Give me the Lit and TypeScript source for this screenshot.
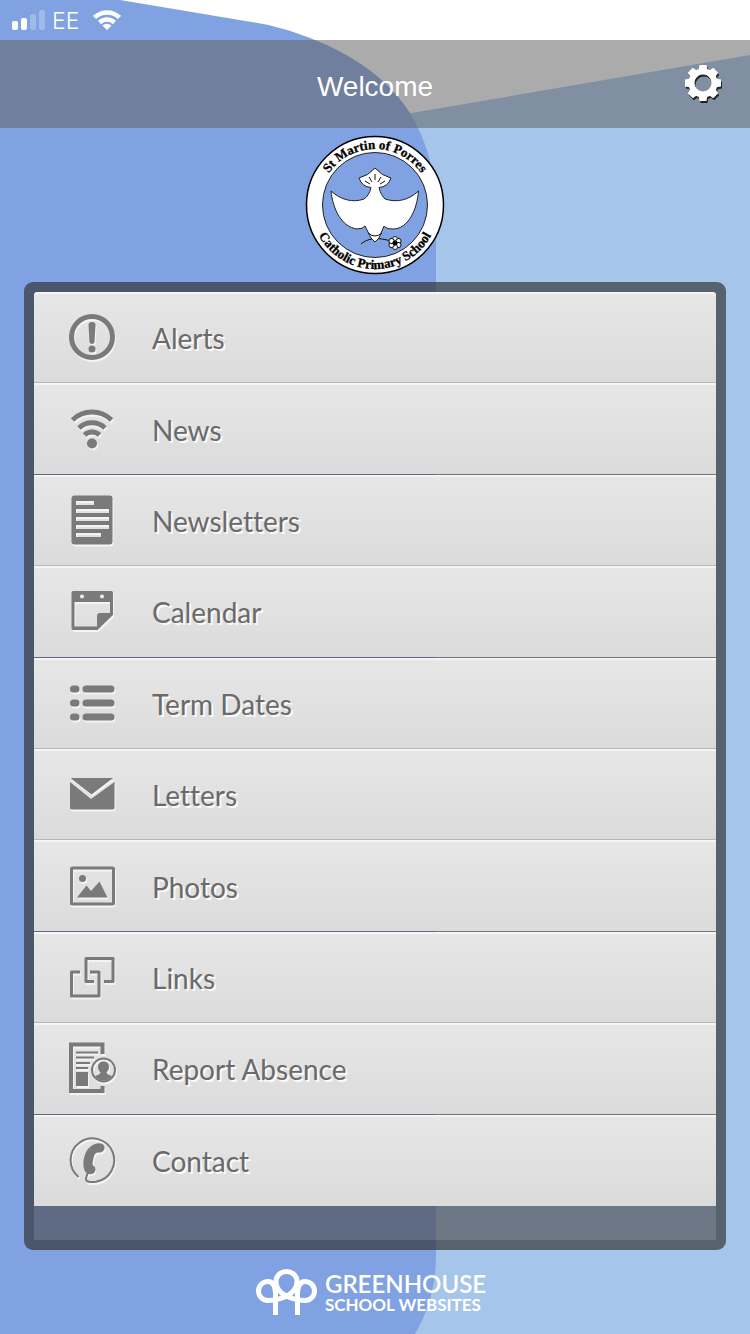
import { LitElement, html, svg, css } from "lit";
import { customElement } from "lit/decorators.js";

const wifi = svg`
  <path class="line w5" d="M-19.5-9A28 28 0 0 1 19.5-9M-13-1A19 19 0 0 1 13-1M-7.500 6A11 11 0 0 1 7.500 6"/>
  <circle cx="0" cy="14.500" r="5"/>`;

const icons = {
  alert: svg`
    <circle class="line w5" cx="0" cy="0" r="20.500"/>
    <path d="M-3.500-12.500Q-3.500-15 0-15T3.500-12.500L2.500 5Q2 7 0 7T-2.500 5Z"/>
    <circle cx="0" cy="12" r="3.500"/>`,
  news: wifi,
  newsletter: svg`
    <path fill-rule="evenodd" d="M-17.500-24.500H17.500Q20.500-24.500 20.500-21.500V21.500Q20.500 24.500 17.500 24.500H-17.500Q-20.500 24.500-20.500 21.500V-21.500Q-20.500-24.500-17.500-24.500Z
      M-16-19V-15H2V-19ZM-16-11V-7H17V-11ZM-16-3V1H17V-3ZM-16 5V9H17V5ZM-16 13V17H9V13Z"/>`,
  calendar: svg`
    <path fill-rule="evenodd" d="M-19-20H19Q21-20 21-18V4L5.500 19H-19Q-20.500 19-20.500 17V-18Q-20.500-20-19-20Z
      M-17.500-9V15.500H5V5Q5 2 8 2H18V-9ZM-12-14.500A2 2 0 1 0-8-14.500A2 2 0 1 0-12-14.500ZM8-14.500A2 2 0 1 0 12-14.500A2 2 0 1 0 8-14.500Z"/>`,
  list: svg`
    <path class="line w7" stroke-linecap="round" d="M-18.500-14H-16M-18.500 0H-16M-18.500 14H-16M-6-14H19M-6 0H19M-6 14H19"/>`,
  letter: svg`
    <path d="M-20-16H21L-.5 0.500L-21-15.500ZM-22-12L-1 5L22.500-12V13.500Q22.500 15.500 20.500 15.500H-20Q-22 15.500-22 13.500Z"/>`,
  photo: svg`
    <rect class="line w3" x="-20.500" y="-18" width="42" height="36" rx="1"/>
    <circle cx="-9.500" cy="-7.500" r="3.500"/>
    <path d="M-15 11.500L-5.500-.5L-1 5L7.500-4.500L15.500 11.500Z"/>`,
  links: svg`
    <path class="line w3" stroke-linejoin="round" d="M2 4.500H-6V-18.500H21V4.500H12M-12-5H-20.500V19H7V-5H-2"/>`,
  absence: svg`
    <path class="line w4" d="M10.500-14V-23.500H-21V23H10.500V18"/>
    <path class="line w2" d="M-16-15.500H6M-16-10.500H2M-16-5H-2M-16 0H-4"/>
    <path d="M-16 4H-4V18H-16Z"/>
    <circle class="line w2" cx="11.500" cy="2" r="11.500"/>
    <path d="M11.500-6.500C15.500-6.500 17-4 17-1C17 1 16 3 14.500 4.500Q15 6.500 20 8A10 10 0 0 1 3 8Q8 6.500 8.500 4.500C7 3 6 1 6-1C6-4 7.500-6.500 11.500-6.500Z"/>`,
  contact: svg`
    <path class="line w2" d="M-13.500 17A21.800 21.800 0 1 1 4 21.700C-2 22.500-6 22-6 19C-6 17-4.500 15-4.500 13"/>
    <path d="M3-16C8-18 12-16 12.500-13C13-9 9-7 7-7.500C5-8 3-7 2-4C1 0 0 4 1 5.500C4 7 4 10 2.500 12.500C0 15-4 14.500-6 12.500C-11 7-9-12 3-16Z"/>`,
};

type Item = { label: string; icon: keyof typeof icons; seam?: boolean };

const items: Item[] = [
  { label: "Alerts", icon: "alert" },
  { label: "News", icon: "news", seam: true },
  { label: "Newsletters", icon: "newsletter" },
  { label: "Calendar", icon: "calendar", seam: true },
  { label: "Term Dates", icon: "list" },
  { label: "Letters", icon: "letter" },
  { label: "Photos", icon: "photo", seam: true },
  { label: "Links", icon: "links" },
  { label: "Report Absence", icon: "absence", seam: true },
  { label: "Contact", icon: "contact" },
];

const teeth = [0, 45, 90, 135, 180, 225, 270, 315];

@customElement("school-crest")
export class SchoolCrest extends LitElement {
  static styles = css`
    :host { display: block; width: 140px; height: 140px; }
    .crest { display: block; width: 100%; height: 100%; }
    .name { font: bold 13px "Liberation Serif", serif; fill: #000; stroke: #000; stroke-width: 0.3; }
    .ink { fill: none; stroke: #111; stroke-width: 1; }
    .shape { fill: #fff; stroke: #222; stroke-width: 1; }
  `;

  render() {
    return html`<svg class="crest" viewBox="-70 -70 140 140" role="img" aria-label="St Martin of Porres Catholic Primary School">
      <defs>
        <path id="top" d="M-56 0A56 56 0 0 1 56 0"/>
        <path id="bottom" d="M-64 0A64 64 0 0 0 64 0"/>
      </defs>
      <circle r="68.500" fill="#fff" stroke="#000" stroke-width="1.500"/>
      <circle r="52.500" fill="#80a2e2" stroke="#222"/>
      <text class="name" text-anchor="middle"><textPath href="#top" startOffset="50%">St Martin of Porres</textPath></text>
      <text class="name" text-anchor="middle"><textPath href="#bottom" startOffset="50%">Catholic Primary School</textPath></text>
      <path class="ink" d="M-14 39C-7 33 2 32 16 36"/>
      <path class="shape" d="M0-37Q7-29 16-27Q13-18 4-17.500C5-12 8-8 10-6C22-2 34-5 43.500-14C42 5 33 24 18 24Q11 24 9 21L4 33L0 37L-4 33L-10 21Q-12 24-18 24C-33 22-42 5-44-14C-34-5-22-2-11-6C-8-8-5-12-4-17.500Q-13-18-16-27Q-7-29 0-37Z"/>
      <path class="ink" d="M0-31V-25M-6-28L-3-23M6-28L3-23M-10-24L-5-21M10-24L5-21M-7 28Q0 34 7 28"/>
      ${[0, 60, 120, 180, 240, 300].map(
        (a) => svg`<circle class="shape" cx="20" cy="34" r="2.500" transform="rotate(${a} 20 38)"/>`
      )}
      <circle cx="20" cy="38" r="2.500"/>
    </svg>`;
  }
}

@customElement("menu-row")
export class MenuRow extends LitElement {
  static properties = { label: {}, icon: {} };
  declare label: string;
  declare icon: keyof typeof icons;

  static styles = css`
    :host { display: grid; }
    .link {
      display: flex;
      align-items: center;
      gap: 35px;
      padding: 0 33px;
      color: #6a6a6a;
      font: 28px/36px Lato, sans-serif;
      font-variant-ligatures: none;
      text-decoration: none;
      text-shadow: 2px 2px 0 #fafafa;
    }
    .glyph {
      flex: none;
      width: 50px;
      height: 54px;
      fill: #7a7a7a;
      filter: drop-shadow(1px 2px 0 #f4f4f4);
    }
    .line { fill: none; stroke: #7a7a7a; }
    .w2 { stroke-width: 2; }
    .w3 { stroke-width: 3; }
    .w4 { stroke-width: 4; }
    .w5 { stroke-width: 5; }
    .w7 { stroke-width: 7; }
    .label { padding-top: 2px; }
  `;

  render() {
    return html`<a class="link" href="#">
      <svg class="glyph" viewBox="-25 -27 50 54" aria-hidden="true">${icons[this.icon]}</svg>
      <span class="label">${this.label}</span>
    </a>`;
  }
}

@customElement("app-root")
export class AppRoot extends LitElement {
  static styles = css`
    :host {
      display: flex;
      flex-direction: column;
      position: relative;
      isolation: isolate;
      min-height: 100vh;
      background: #fff;
      color: #fff;
      font-family: "Liberation Sans", sans-serif;
    }
    .backdrop {
      position: absolute;
      inset: 0;
      z-index: -1;
      width: 100%;
      height: 100%;
    }
    .status {
      display: flex;
      align-items: center;
      height: 40px;
      padding: 0 12px;
      gap: 7px;
      font: 300 23px/40px Inter, sans-serif;
    }
    .carrier { padding-top: 2px; }
    .bars { width: 33px; height: 20px; fill: #fff; }
    .signal { width: 28px; height: 20px; margin-left: 7px; fill: none; stroke: #fff; }
    .header {
      display: grid;
      grid-template-columns: 1fr auto 1fr;
      align-items: center;
      height: 88px;
      padding: 0 26px;
      background: rgba(96, 96, 96, 0.53);
    }
    .title {
      grid-column: 2;
      margin: 0;
      padding-top: 6px;
      font-size: 28px;
      line-height: 36px;
      font-weight: 400;
    }
    .settings {
      justify-self: end;
      width: 42px;
      height: 42px;
      padding: 0;
      border: 0;
      background: none;
    }
    .gear { display: block; width: 42px; height: 42px; fill: #fff; filter: drop-shadow(1px 2px 0 #222); }
    .crest { align-self: center; margin: 7px 0; }
    .panel {
      flex: 1;
      display: flex;
      flex-direction: column;
      margin: 0 24px;
      padding-bottom: 34px;
      border: 10px solid rgba(47, 47, 47, 0.66);
      border-radius: 9px;
      background: rgba(77, 77, 77, 0.64) padding-box;
    }
    .menu {
      flex: 1;
      display: grid;
      grid-auto-rows: minmax(72px, 1fr);
      margin: 0;
      padding: 0;
      list-style: none;
    }
    .item {
      display: grid;
      border-bottom: 1px solid #b8b8b8;
      background: linear-gradient(#e7e7e7, #dbdbdb) padding-box;
      box-shadow: inset 0 2px 0 #f5f5f5;
    }
    .item:first-child { border-radius: 4px 4px 0 0; }
    .item:last-child { border-bottom: 0; }
    .seam { border-bottom-color: transparent; }
    .footer {
      display: flex;
      justify-content: center;
      align-items: center;
      gap: 8px;
      height: 84px;
      padding: 0 8px 0 0;
      color: #fff;
      text-decoration: none;
      font-family: Lato, sans-serif;
      font-weight: 600;
    }
    .emblem { width: 61px; height: 46px; fill: none; stroke: #fff; stroke-width: 5; }
    .brand { display: grid; padding-top: 2px; }
    .big { font-size: 24px; line-height: 24px; }
    .small { font-size: 17px; line-height: 18px; font-weight: 700; }
  `;

  render() {
    return html`
      <svg class="backdrop" viewBox="0 0 750 1334" preserveAspectRatio="none" aria-hidden="true">
        <path fill="#a5c5eb" d="M400 115L750 55V1334H400Z"/>
        <path fill="#80a2e2" d="M0 0H120L258 23C286 28 313 38 337 50C370 67 394 88 410 113C427 141 436 174 436 208V1255C436 1285 428 1312 415 1334H0Z"/>
      </svg>
      <div class="status">
        <svg class="bars" viewBox="0 0 33 20" aria-hidden="true">
          <rect y="11" width="6" height="9" rx="2"/><rect x="9" y="8" width="6" height="12" rx="2"/>
          <rect x="18" y="4" width="6" height="16" rx="2" opacity=".25"/><rect x="27" width="6" height="20" rx="2" opacity=".25"/>
        </svg>
        <span class="carrier">EE</span>
        <svg class="signal" viewBox="0 0 28 20" aria-hidden="true">
          <path stroke-width="4.500" d="M1.500 7.500A18 18 0 0 1 26.500 7.500M6.500 12.500A11 11 0 0 1 21.500 12.500"/>
          <path fill="#fff" stroke="none" d="M14 20L9.500 15.500Q14 12 18.500 15.500Z"/>
        </svg>
      </div>
      <header class="header">
        <h1 class="title">Welcome</h1>
        <button class="settings" aria-label="Settings">
          <svg class="gear" viewBox="-21 -20 42 42" aria-hidden="true">
            <circle r="11.500" fill="none" stroke="#fff" stroke-width="6"/>
            ${teeth.map((a) => svg`<path d="M-4.500-12L-3.500-18H3.500L4.500-12Z" transform="rotate(${a})"/>`)}
          </svg>
        </button>
      </header>
      <school-crest class="crest"></school-crest>
      <nav class="panel" aria-label="Main">
        <ul class="menu">
          ${items.map(
            (i) => html`<li class="item ${i.seam ? "seam" : ""}"><menu-row .label=${i.label} .icon=${i.icon}></menu-row></li>`
          )}
        </ul>
      </nav>
      <a class="footer" href="#">
        <svg class="emblem" viewBox="0 0 61 46" aria-hidden="true">
          <path d="M19.500 46V28C20 18 17 12.500 12 12.500A9.500 9.500 0 0 0 12 31.500C24 31 41 26 41 12.500A10.500 10 0 0 0 20 12.500C20 26 37 31 49 31.500A9.500 9.500 0 0 0 49 12.500C44 12.500 41 18 41.500 28V46"/>
        </svg>
        <span class="brand"><span class="big">GREENHOUSE</span><span class="small">SCHOOL WEBSITES</span></span>
      </a>
    `;
  }
}
